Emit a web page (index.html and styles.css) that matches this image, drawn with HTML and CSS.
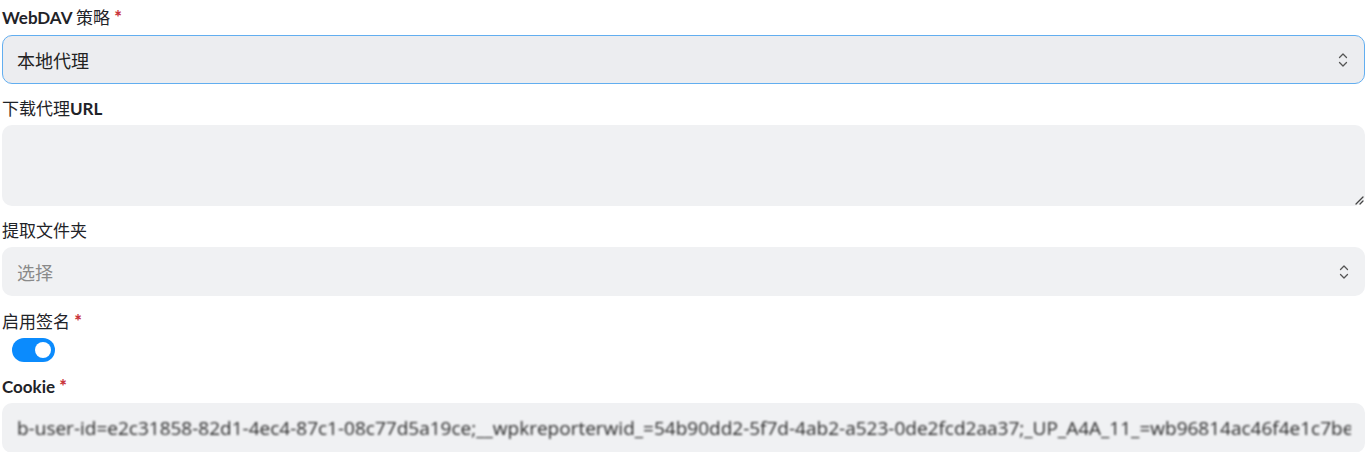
FILE: index.html
```html
<!DOCTYPE html>
<html lang="zh">
<head>
<meta charset="utf-8">
<link rel="stylesheet" href="styles.css">
</head>
<body>
<form class="form">
  <div class="field">
    <label class="label">WebDAV <span class="cjk">策略</span> <span class="req">*</span></label>
    <div class="select focused">
      <span class="value">本地代理</span>
      <svg class="chev" width="10" height="16" viewBox="0 0 10 16"><path d="M1.5 5.5 L5 2 L8.5 5.5 M1.5 10.5 L5 14 L8.5 10.5" fill="none" stroke="#555" stroke-width="1.3" stroke-linecap="round" stroke-linejoin="round"/></svg>
    </div>
  </div>
  <div class="field">
    <label class="label"><span class="cjk">下载代理</span>URL</label>
    <div class="textarea">
      <svg class="grip" width="10" height="10" viewBox="0 0 10 10"><path d="M9 2 L2 9 M9 6 L6 9" stroke="#444" stroke-width="1.3" stroke-linecap="round"/></svg>
    </div>
  </div>
  <div class="field">
    <label class="label"><span class="cjk">提取文件夹</span></label>
    <div class="select">
      <span class="value placeholder">选择</span>
      <svg class="chev" width="10" height="16" viewBox="0 0 10 16"><path d="M1.5 5.5 L5 2 L8.5 5.5 M1.5 10.5 L5 14 L8.5 10.5" fill="none" stroke="#555" stroke-width="1.3" stroke-linecap="round" stroke-linejoin="round"/></svg>
    </div>
  </div>
  <div class="field">
    <label class="label"><span class="cjk">启用签名</span> <span class="req">*</span></label>
    <div class="toggle-row">
      <span class="toggle"><span class="knob"></span></span>
    </div>
  </div>
  <div class="field">
    <label class="label">Cookie <span class="req">*</span></label>
    <div class="input">
      <span class="value blurred">b-user-id=e2c31858-82d1-4ec4-87c1-08c77d5a19ce;__wpkreporterwid_=54b90dd2-5f7d-4ab2-a523-0de2fcd2aa37;_UP_A4A_11_=wb96814ac46f4e1c7be</span>
    </div>
  </div>
</form>
</body>
</html>
```
FILE: styles.css
```css
html, body {
  margin: 0;
  padding: 0;
  background: #ffffff;
}
body {
  font-family: Lato, "Noto Sans CJK SC", sans-serif;
  color: #1f2328;
}
.form {
  display: flex;
  flex-direction: column;
  gap: 13px;
  padding: 5px 0 0 2px;
}
.field {
  display: flex;
  flex-direction: column;
  gap: 4px;
}
.field:first-child {
  gap: 5px;
}
.label {
  font-size: 17px;
  line-height: 24px;
  font-weight: 700;
  color: #1f2328;
}
.cjk {
  font-weight: 400;
}
.req {
  color: #c9353b;
  font-weight: 900;
  font-size: 18px;
}
.select, .input {
  height: 49px;
  box-sizing: border-box;
  border-radius: 10px;
  background: #f0f1f3;
  display: flex;
  align-items: center;
  justify-content: space-between;
  padding: 0 16px 0 15px;
}
.select.focused {
  height: 49px;
  border: 1px solid #62aef0;
  background: #ecedf0;
  padding-left: 14px;
}
.value {
  font-size: 18px;
  color: #222;
  font-family: "Noto Sans CJK SC", sans-serif;
}
.placeholder {
  color: #8a8a8a;
}
.chev {
  display: block;
}
.textarea {
  height: 81px;
  border-radius: 10px;
  background: #f0f1f3;
  position: relative;
}
.grip {
  position: absolute;
  right: 1px;
  bottom: 1px;
}
.toggle-row {
  height: 24px;
  padding-left: 10px;
  display: flex;
  align-items: center;
}
.toggle {
  width: 43px;
  height: 24px;
  border-radius: 12px;
  background: #0b8bfd;
  display: flex;
  align-items: center;
  justify-content: flex-end;
  padding-right: 4px;
  box-sizing: border-box;
}
.knob {
  width: 16px;
  height: 16px;
  border-radius: 50%;
  background: #fff;
}
.field:nth-child(4) {
  margin-bottom: -1px;
}
.input {
  height: 50px;
  overflow: hidden;
  padding-right: 14px;
}
.input .value {
  font-family: "Open Sans", sans-serif;
  font-size: 19px;
  color: #2a2a2a;
  white-space: nowrap;
  overflow: hidden;
  filter: blur(0.8px);
}
```
